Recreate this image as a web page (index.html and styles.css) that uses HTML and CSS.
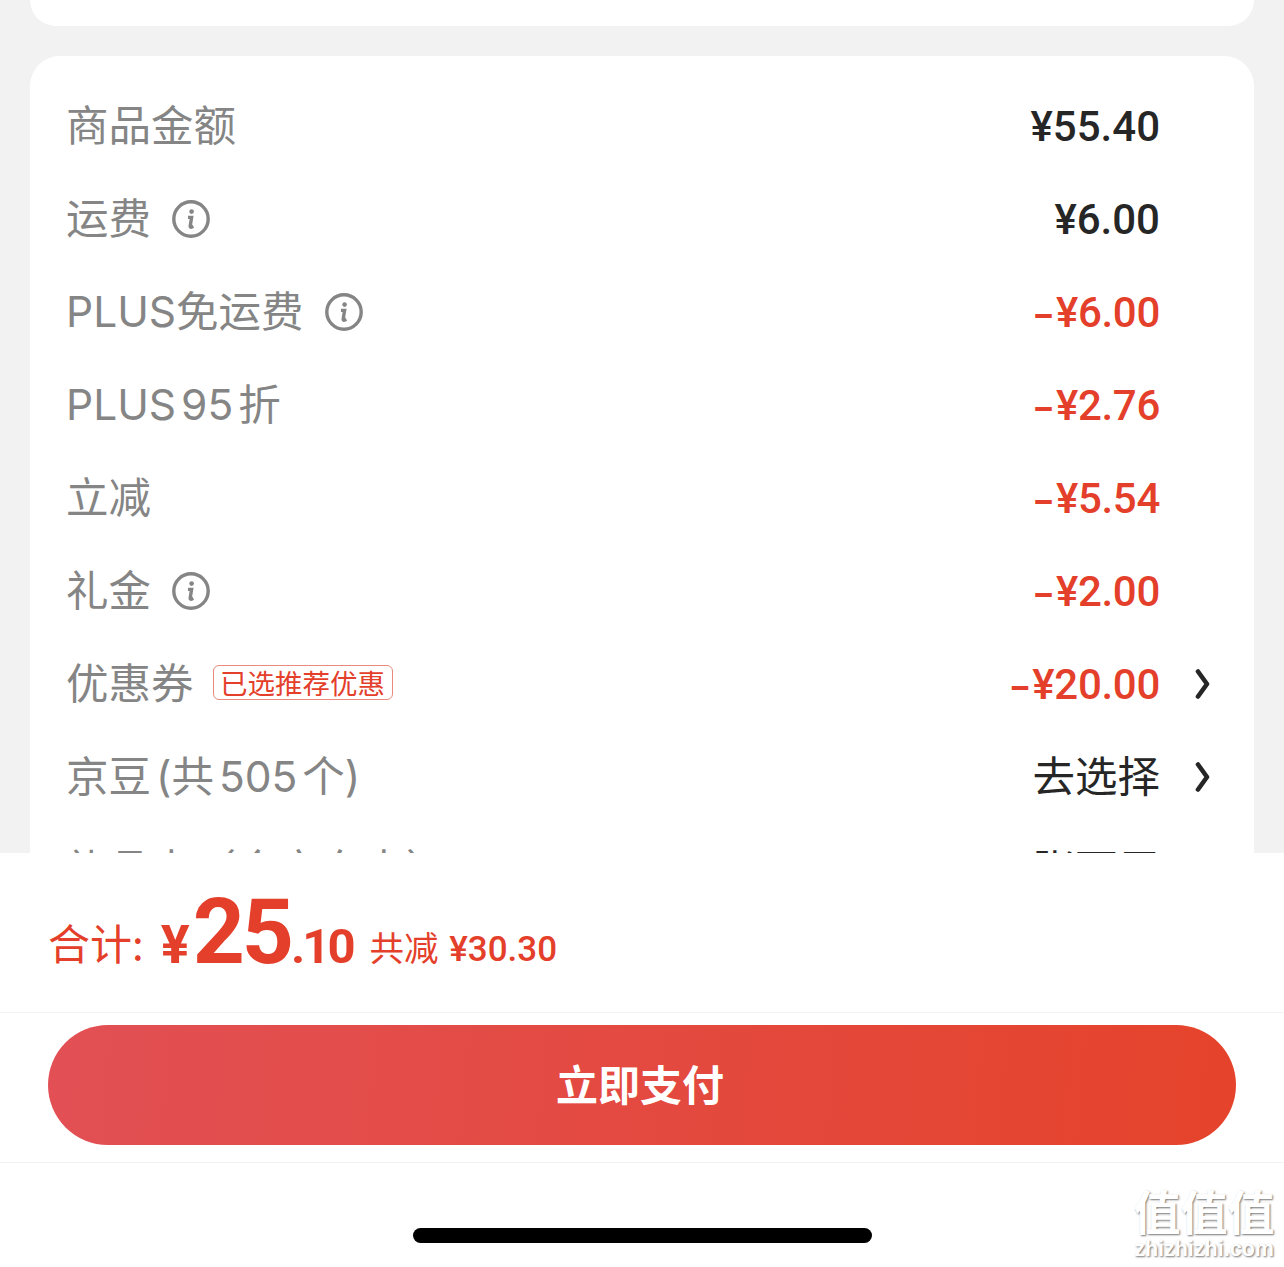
FILE: index.html
```html
<!DOCTYPE html>
<html lang="zh-CN">
<head>
    <meta charset="UTF-8">
    <meta name="viewport" content="width=device-width, initial-scale=1.0">
    <title>订单结算</title>
    <link rel="stylesheet" href="styles.css">
</head>

<body>
    <div class="page">
        <!-- Scrolling order area -->
        <main class="scroller">
            <div class="card card-top"></div>

            <section class="card card-fees">
                <div class="row">
                    <span class="label">商品金额</span>
                    <span class="value">¥55.40</span>
                </div>
                <div class="row">
                    <span class="label">运费
                        <svg class="info" viewBox="0 0 38 38"><circle cx="19" cy="19" r="17.2"/><circle class="dot" cx="19.6" cy="11.6" r="2.3"/><path d="M16 17.4h3.6l-1.4 8.6q-.2 1.5 1.3 1.1l1.8-.9"/></svg>
                    </span>
                    <span class="value">¥6.00</span>
                </div>
                <div class="row">
                    <span class="label">PLUS免运费
                        <svg class="info" viewBox="0 0 38 38"><circle cx="19" cy="19" r="17.2"/><circle class="dot" cx="19.6" cy="11.6" r="2.3"/><path d="M16 17.4h3.6l-1.4 8.6q-.2 1.5 1.3 1.1l1.8-.9"/></svg>
                    </span>
                    <span class="value red"><span class="minus">–</span>¥6.00</span>
                </div>
                <div class="row">
                    <span class="label">PLUS 95 折</span>
                    <span class="value red"><span class="minus">–</span>¥2.76</span>
                </div>
                <div class="row">
                    <span class="label">立减</span>
                    <span class="value red"><span class="minus">–</span>¥5.54</span>
                </div>
                <div class="row">
                    <span class="label">礼金
                        <svg class="info" viewBox="0 0 38 38"><circle cx="19" cy="19" r="17.2"/><circle class="dot" cx="19.6" cy="11.6" r="2.3"/><path d="M16 17.4h3.6l-1.4 8.6q-.2 1.5 1.3 1.1l1.8-.9"/></svg>
                    </span>
                    <span class="value red"><span class="minus">–</span>¥2.00</span>
                </div>
                <div class="row has-arrow">
                    <span class="label">优惠券 <span class="tag">已选推荐优惠</span></span>
                    <span class="value red"><span class="minus">–</span>¥20.00</span>
                    <svg class="arrow" viewBox="0 0 16 30"><path d="M3 2.5l9 12.5-9 12.5"/></svg>
                </div>
                <div class="row has-arrow">
                    <span class="label">京豆 (共 505 个)</span>
                    <span class="value plain">去选择</span>
                    <svg class="arrow" viewBox="0 0 16 30"><path d="M3 2.5l9 12.5-9 12.5"/></svg>
                </div>
                <div class="row">
                    <span class="label">礼品卡（含京东卡）</span>
                    <span class="value plain">张可用</span>
                </div>
            </section>
        </main>

        <!-- Fixed footer -->
        <footer class="footer">
            <div class="total">
                <span class="total-label">合计:</span>
                <span class="total-yen">¥</span><span class="total-int">25</span><span class="total-dec">.10</span>
                <span class="total-cut">共减 <b>¥30.30</b></span>
            </div>
            <div class="pay-bar">
                <button class="pay-btn">立即支付</button>
            </div>
            <div class="home-bar"><span class="home-line"></span></div>
        </footer>

        <div class="watermark">
            <span class="wm-mark">值值值</span>
            <span class="wm-url">zhizhizhi.com</span>
        </div>
    </div>
</body>
</html>
```

FILE: styles.css
```css
:root {
    --bg: #f2f2f2;
    --red: #e43f2b;
    --label: #858585;
    --text: #262626;
    --sans: "Inter", "Noto Sans CJK SC", sans-serif;
    --cjk: "Noto Sans CJK SC", "Noto Sans", sans-serif;
    --num: "Roboto", "Noto Sans CJK SC", sans-serif;
}

* {
    box-sizing: border-box;
}

html, body {
    margin: 0;
    padding: 0;
}

body {
    background: var(--bg);
    font-family: var(--cjk);
}

.page {
    position: relative;
    width: 1284px;
    height: 1267px;
    display: flex;
    flex-direction: column;
    overflow: hidden;
}

.scroller {
    height: 853px;
    flex: none;
    overflow: hidden;
    padding: 0 30px;
}

.card {
    background: #fff;
    border-radius: 30px;
}

.card-top {
    height: 26px;
    border-radius: 0 0 30px 30px;
    margin-bottom: 30px;
}

.card-fees {
    padding: 23px 37px 0;
    height: 900px;
}

.row {
    height: 93px;
    padding-right: 57px;
    display: flex;
    align-items: center;
    justify-content: space-between;
    position: relative;
}

.label {
    display: flex;
    align-items: center;
    margin-left: -1px;
    font-family: var(--sans);
    font-size: 42.5px;
    line-height: 60px;
    word-spacing: -7px;
    color: var(--label);
    white-space: nowrap;
}

.info {
    width: 38px;
    height: 38px;
    margin-left: 21px;
    fill: none;
    stroke: var(--label);
    stroke-width: 3.4;
}

.info .dot {
    fill: var(--label);
    stroke: none;
}

.tag {
    height: 35px;
    margin: -2px 0 0 19px;
    padding: 0 6.5px;
    font-family: var(--cjk);
    font-size: 27.5px;
    line-height: 32px;
    color: var(--red);
    border: 1px solid #ea8a7d;
    border-radius: 6px;
    word-spacing: 0;
}

.value {
    padding-top: 2px;
    font-family: var(--num);
    font-size: 42px;
    font-weight: 500;
    color: var(--text);
}

.value.red {
    color: var(--red);
    letter-spacing: -0.3px;
}

.value.plain {
    padding: 0 0 6px;
    font-family: var(--cjk);
    font-size: 42.5px;
    font-weight: 400;
}

.minus {
    font-size: 32px;
    font-weight: 900;
    letter-spacing: 3px;
}

.arrow {
    position: absolute;
    right: 6px;
    top: 32px;
    width: 16px;
    height: 30px;
    fill: none;
    stroke: var(--text);
    stroke-width: 4.6;
    stroke-linecap: round;
    stroke-linejoin: round;
}

.footer {
    flex: 1;
    background: #fff;
    display: flex;
    flex-direction: column;
}

.total {
    height: 160px;
    padding: 29px 48px 18px;
    border-bottom: 1px solid #f2f2f2;
    display: flex;
    align-items: baseline;
    color: var(--red);
    white-space: pre;
}

.total-label {
    font-size: 42px;
    margin-right: 17px;
    transform: translateY(-3px);
}

.total-yen {
    font-family: var(--num);
    font-size: 54px;
    font-weight: 700;
    margin-right: 3px;
}

.total-int {
    font-family: var(--num);
    font-size: 91px;
    font-weight: 700;
    line-height: 100px;
    letter-spacing: -3px;
}

.total-dec {
    font-family: var(--num);
    font-size: 49px;
    font-weight: 700;
    letter-spacing: -3px;
}

.total-cut {
    font-size: 34.5px;
    margin-left: 17px;
    transform: translateY(-2px);
}

.total-cut b {
    font-family: var(--num);
    font-size: 35px;
    font-weight: 500;
    margin-left: 3px;
}

.pay-bar {
    height: 150px;
    padding: 12px 48px 0;
    border-bottom: 1px solid #f2f2f2;
}

.pay-btn {
    display: block;
    width: 100%;
    height: 120px;
    padding: 0 4px 6px 0;
    border: none;
    border-radius: 60px;
    background: linear-gradient(95deg, #e25055, #e5432b);
    color: #fff;
    font-family: var(--cjk);
    font-size: 42px;
    font-weight: 700;
}

.home-bar {
    flex: 1;
    padding: 65px 0 0 413px;
}

.home-line {
    display: block;
    width: 459px;
    height: 15px;
    border-radius: 8px;
    background: #000;
}

.watermark {
    position: absolute;
    right: 9px;
    bottom: 6px;
    width: 142px;
    display: flex;
    flex-direction: column;
    align-items: center;
    color: #fff;
    text-shadow: 1px 1px 2px #777;
}

.wm-mark {
    font-size: 47px;
    font-weight: 700;
    line-height: 50px;
    margin-top: -2px;
    padding-bottom: 2px;
    white-space: nowrap;
}

.wm-url {
    font-family: "Liberation Sans", sans-serif;
    font-size: 21.5px;
    line-height: 24px;
    font-weight: 700;
}
```
